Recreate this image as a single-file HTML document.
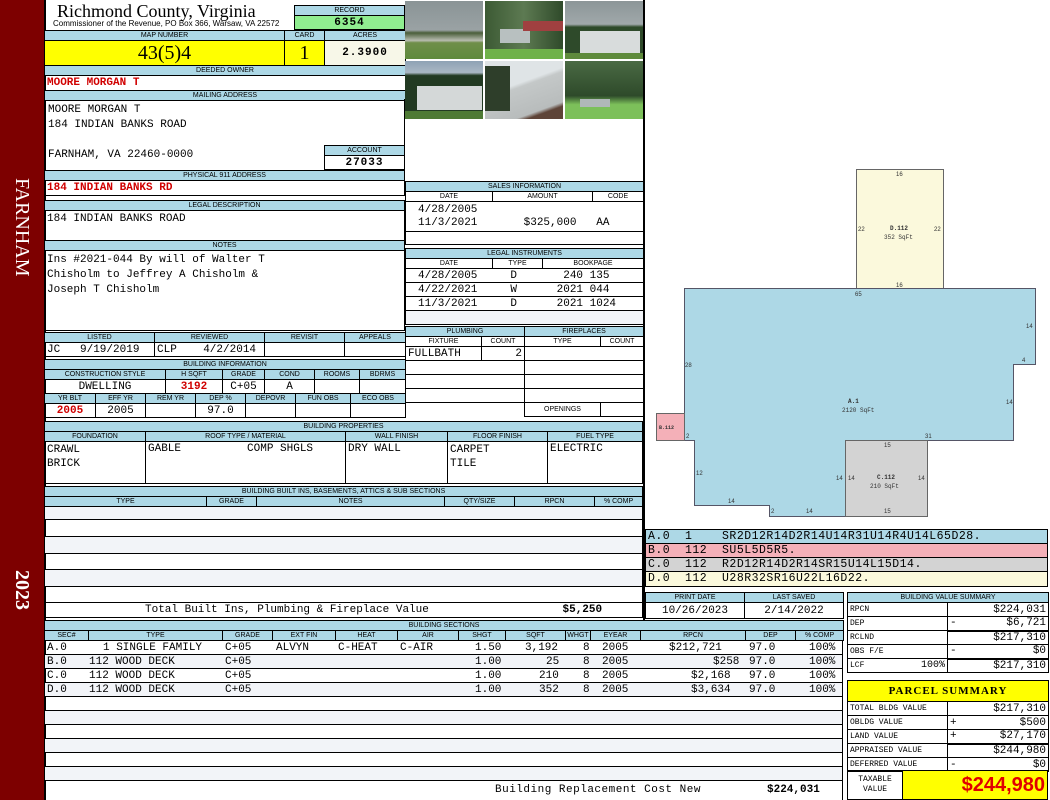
<!DOCTYPE html>
<html><head><meta charset="utf-8"><style>
*{margin:0;padding:0;box-sizing:border-box}
body{width:1050px;height:800px;position:relative;background:#fff;overflow:hidden;font-family:"Liberation Mono",monospace;font-size:11px;color:#000}
.a{position:absolute}
table{position:absolute;border-collapse:collapse;table-layout:fixed}
td{border:1px solid #000;padding:0 2px;white-space:nowrap;overflow:hidden;font-family:"Liberation Mono",monospace;font-size:11px;height:14px;line-height:12px}
td.h{background:#add8e6;font:7px "Liberation Sans",sans-serif;text-align:center;height:10px;line-height:9px;padding:0}
.c{text-align:center}.r{text-align:right}
.red{color:#d00000;font-weight:bold}
.alt td{background:#f2f4f8}
.side{position:absolute;left:0;top:0;width:44px;height:800px;background:#7d0000}
.vt{position:absolute;color:#fff;font:20px "Liberation Serif",serif;transform:rotate(90deg);transform-origin:left top;white-space:nowrap}
.ph{position:absolute;width:78px;height:58px}
.sr{position:absolute;left:44px;width:799px;height:14px;border-bottom:1px solid #000;border-left:1px solid #000;border-right:1px solid #000}
.sr span{position:absolute;top:1px;line-height:13px}
</style></head><body>
<div class="side"></div>
<div class="vt" style="left:33px;top:178px">FARNHAM</div>
<div class="vt" style="left:33px;top:570px;font-weight:bold">2023</div>
<div class="a" style="left:44px;top:0;width:2px;height:800px;background:#000"></div>
<div class="a" style="left:643px;top:0;width:2px;height:620px;background:#000"></div>

<div class="a" style="left:57px;top:1px;font:18px 'Liberation Serif',serif">Richmond County, Virginia</div>
<div class="a" style="left:53px;top:19px;font:8px 'Liberation Sans',sans-serif">Commissioner of the Revenue, PO Box 366, Warsaw, VA 22572</div>
<table style="left:294px;top:5px;width:111px"><tr><td class="h">RECORD</td></tr><tr><td class="c" style="background:#90ee90;font-weight:bold;letter-spacing:1px">6354</td></tr></table>

<table style="left:44px;top:30px;width:361px"><col style="width:240px"><col style="width:40px"><col style="width:81px">
<tr><td class="h">MAP NUMBER</td><td class="h">CARD</td><td class="h">ACRES</td></tr>
<tr><td class="c" style="background:#ffff00;font:20px 'Liberation Serif',serif;height:25px">43(5)4</td><td class="c" style="background:#ffff00;font:20px 'Liberation Serif',serif">1</td><td class="c" style="background:#f7f7e8;font-weight:bold;letter-spacing:1px">2.3900</td></tr>
<tr><td class="h" colspan="3">DEEDED OWNER</td></tr>
<tr><td colspan="3" class="red" style="height:15px">MOORE MORGAN T</td></tr>
<tr><td class="h" colspan="3">MAILING ADDRESS</td></tr>
</table>
<div class="a" style="left:44px;top:99px;width:361px;height:72px;border:1px solid #000;border-top:0"></div>
<div class="a" style="left:48px;top:103px;line-height:15px">MOORE MORGAN T<br>184 INDIAN BANKS ROAD<br><br>FARNHAM, VA 22460-0000</div>
<table style="left:324px;top:145px;width:81px"><tr><td class="h">ACCOUNT</td></tr><tr><td class="c" style="font-weight:bold;letter-spacing:1px">27033</td></tr></table>
<table style="left:44px;top:170px;width:361px"><tr><td class="h">PHYSICAL 911 ADDRESS</td></tr><tr><td class="red" style="height:15px">184 INDIAN BANKS RD</td></tr></table>

<table style="left:44px;top:200px;width:361px"><tr><td class="h">LEGAL DESCRIPTION</td></tr><tr><td style="height:30px;vertical-align:top;padding-top:2px">184 INDIAN BANKS ROAD</td></tr>
<tr><td class="h">NOTES</td></tr><tr><td style="height:80px;vertical-align:top;padding-top:2px;line-height:15px">Ins #2021-044 By will of Walter T<br>Chisholm to Jeffrey A Chisholm &amp;<br>Joseph T Chisholm</td></tr></table>

<table style="left:44px;top:332px;width:361px"><col style="width:110px"><col style="width:110px"><col style="width:80px"><col style="width:61px">
<tr><td class="h">LISTED</td><td class="h">REVIEWED</td><td class="h">REVISIT</td><td class="h">APPEALS</td></tr>
<tr><td>JC&nbsp;&nbsp;&nbsp;9/19/2019</td><td>CLP&nbsp;&nbsp;&nbsp;&nbsp;4/2/2014</td><td></td><td></td></tr></table>

<table style="left:44px;top:359px;width:361px"><col style="width:121px"><col style="width:57px"><col style="width:42px"><col style="width:50px"><col style="width:45px"><col style="width:46px">
<tr><td class="h" colspan="6">BUILDING INFORMATION</td></tr>
<tr><td class="h">CONSTRUCTION STYLE</td><td class="h">H SQFT</td><td class="h">GRADE</td><td class="h">COND</td><td class="h">ROOMS</td><td class="h">BDRMS</td></tr>
<tr><td class="c">DWELLING</td><td class="c red">3192</td><td class="c">C+05</td><td class="c">A</td><td></td><td></td></tr></table>
<table style="left:44px;top:393px;width:361px"><col style="width:51px"><col style="width:50px"><col style="width:50px"><col style="width:50px"><col style="width:50px"><col style="width:55px"><col style="width:55px">
<tr><td class="h">YR BLT</td><td class="h">EFF YR</td><td class="h">REM YR</td><td class="h">DEP %</td><td class="h">DEPOVR</td><td class="h">FUN OBS</td><td class="h">ECO OBS</td></tr>
<tr><td class="c red">2005</td><td class="c">2005</td><td></td><td class="c">97.0</td><td></td><td></td><td></td></tr></table>

<table style="left:44px;top:421px;width:598px"><col style="width:101px"><col style="width:200px"><col style="width:102px"><col style="width:100px"><col style="width:95px">
<tr><td class="h" colspan="5">BUILDING PROPERTIES</td></tr>
<tr><td class="h">FOUNDATION</td><td class="h">ROOF TYPE / MATERIAL</td><td class="h">WALL FINISH</td><td class="h">FLOOR FINISH</td><td class="h">FUEL TYPE</td></tr>
<tr><td style="height:42px;vertical-align:top;line-height:14px;padding-top:1px">CRAWL<br>BRICK</td><td style="vertical-align:top;padding-top:1px">GABLE&nbsp;&nbsp;&nbsp;&nbsp;&nbsp;&nbsp;&nbsp;&nbsp;&nbsp;&nbsp;COMP SHGLS</td><td style="vertical-align:top;padding-top:1px">DRY WALL</td><td style="vertical-align:top;line-height:14px;padding-top:1px">CARPET<br>TILE</td><td style="vertical-align:top;padding-top:1px">ELECTRIC</td></tr></table>

<table style="left:44px;top:486px;width:598px"><col style="width:162px"><col style="width:50px"><col style="width:188px"><col style="width:70px"><col style="width:80px"><col style="width:48px">
<tr><td class="h" colspan="6">BUILDING BUILT INS, BASEMENTS, ATTICS &amp; SUB SECTIONS</td></tr>
<tr><td class="h">TYPE</td><td class="h">GRADE</td><td class="h">NOTES</td><td class="h">QTY/SIZE</td><td class="h">RPCN</td><td class="h">% COMP</td></tr>
<tr class="alt"><td colspan="6" style="height:13px;border-bottom:0"></td></tr>
<tr><td colspan="6" style="height:17px"></td></tr>
<tr class="alt"><td colspan="6" style="height:17px"></td></tr>
<tr><td colspan="6" style="height:16px"></td></tr>
<tr class="alt"><td colspan="6" style="height:17px"></td></tr>
<tr><td colspan="6" style="height:16px"></td></tr>
<tr><td colspan="6" style="height:15px;padding-left:100px">Total Built Ins, Plumbing &amp; Fireplace Value<span style="position:absolute;left:518px;font-weight:bold">$5,250</span></td></tr></table>

<table style="left:44px;top:620px;width:799px"><col style="width:44px"><col style="width:134px"><col style="width:50px"><col style="width:63px"><col style="width:62px"><col style="width:61px"><col style="width:47px"><col style="width:60px"><col style="width:25px"><col style="width:50px"><col style="width:105px"><col style="width:50px"><col style="width:48px">
<tr><td class="h" colspan="13">BUILDING SECTIONS</td></tr>
<tr><td class="h">SEC#</td><td class="h">TYPE</td><td class="h">GRADE</td><td class="h">EXT FIN</td><td class="h">HEAT</td><td class="h">AIR</td><td class="h">SHGT</td><td class="h">SQFT</td><td class="h">WHGT</td><td class="h">EYEAR</td><td class="h">RPCN</td><td class="h">DEP</td><td class="h">% COMP</td></tr></table>

<div class="sr" style="top:641px"><span style="left:2px">A.0</span><span style="left:58px">1 SINGLE FAMILY</span><span style="left:180px">C+05</span><span style="left:231px">ALVYN</span><span style="left:293px">C-HEAT</span><span style="left:355px">C-AIR</span><span style="left:430px">1.50</span><span style="left:480px">3,192</span><span style="left:538px">8</span><span style="left:557px">2005</span><span style="left:624px">$212,721</span><span style="left:704px">97.0</span><span style="left:764px">100%</span></div>
<div class="sr" style="top:655px;background:#f2f4f8"><span style="left:2px">B.0</span><span style="left:44px">112 WOOD DECK</span><span style="left:180px">C+05</span><span style="left:430px">1.00</span><span style="left:501px">25</span><span style="left:538px">8</span><span style="left:557px">2005</span><span style="left:668px">$258</span><span style="left:704px">97.0</span><span style="left:764px">100%</span></div>
<div class="sr" style="top:669px"><span style="left:2px">C.0</span><span style="left:44px">112 WOOD DECK</span><span style="left:180px">C+05</span><span style="left:430px">1.00</span><span style="left:494px">210</span><span style="left:538px">8</span><span style="left:557px">2005</span><span style="left:646px">$2,168</span><span style="left:704px">97.0</span><span style="left:764px">100%</span></div>
<div class="sr" style="top:683px;background:#f2f4f8"><span style="left:2px">D.0</span><span style="left:44px">112 WOOD DECK</span><span style="left:180px">C+05</span><span style="left:430px">1.00</span><span style="left:494px">352</span><span style="left:538px">8</span><span style="left:557px">2005</span><span style="left:646px">$3,634</span><span style="left:704px">97.0</span><span style="left:764px">100%</span></div>
<div class="sr" style="top:697px"></div>
<div class="sr" style="top:711px;background:#f2f4f8"></div>
<div class="sr" style="top:725px"></div>
<div class="sr" style="top:739px;background:#f2f4f8"></div>
<div class="sr" style="top:753px"></div>
<div class="sr" style="top:767px;background:#f2f4f8"></div>
<div class="sr" style="top:781px;height:19px;border-bottom:0"><span style="left:450px;top:3px;letter-spacing:0.5px">Building Replacement Cost New</span><span style="left:722px;top:3px;font-weight:bold">$224,031</span></div>

<!-- photos -->
<div class="ph" style="left:405px;top:1px;background:linear-gradient(#8a9496 0,#9aa2a4 50%,#4a5e3a 55%,#b8bcb0 68%,#6f8e4a 72%,#5f8a3c 100%)"></div>
<div class="ph" style="left:485px;top:1px;background:linear-gradient(90deg,#3c5a34,#5d7a52,#2f4a2a);"><div class="a" style="left:15px;top:28px;width:30px;height:14px;background:#b8c0c0"></div><div class="a" style="left:38px;top:20px;width:40px;height:10px;background:#a04040"></div><div class="a" style="left:0;top:48px;width:78px;height:10px;background:#6fb24a"></div></div>
<div class="ph" style="left:565px;top:1px;background:linear-gradient(#8c9698 0,#a0a8aa 40%,#2e4a2a 45%,#2e4a2a 100%)"><div class="a" style="left:15px;top:30px;width:60px;height:22px;background:#d8dcdc"></div><div class="a" style="left:0;top:52px;width:78px;height:6px;background:#5e8a3c"></div></div>
<div class="ph" style="left:405px;top:61px;background:linear-gradient(#8ea2b4 0,#aab8c4 20%,#223a22 25%,#223a22 100%)"><div class="a" style="left:12px;top:25px;width:65px;height:24px;background:#d4d8d8"></div><div class="a" style="left:0;top:50px;width:78px;height:8px;background:#4e7a34"></div></div>
<div class="ph" style="left:485px;top:61px;background:linear-gradient(160deg,#dfe4e6 0,#dfe4e6 40%,#c4c8c8 45%,#b8bcbc 80%,#5e4438 85%)"><div class="a" style="left:0;top:5px;width:25px;height:45px;background:#2e3e2a"></div></div>
<div class="ph" style="left:565px;top:61px;background:linear-gradient(#4a6a44 0,#2e4a2a 60%,#7cc05a 75%,#7cc05a 100%)"><div class="a" style="left:15px;top:38px;width:30px;height:8px;background:#b0b8b8"></div></div>

<table style="left:405px;top:181px;width:238px"><col style="width:87px"><col style="width:100px"><col style="width:51px">
<tr><td class="h" colspan="3">SALES INFORMATION</td></tr>
<tr><td class="h" style="background:#fff">DATE</td><td class="h" style="background:#fff">AMOUNT</td><td class="h" style="background:#fff">CODE</td></tr>
<tr><td colspan="3" style="line-height:13px;padding-left:12px;height:30px">4/28/2005<br>11/3/2021&nbsp;&nbsp;&nbsp;&nbsp;&nbsp;&nbsp;&nbsp;$325,000&nbsp;&nbsp;&nbsp;AA</td></tr>
<tr><td colspan="3" style="height:13px"></td></tr></table>
<table style="left:405px;top:248px;width:238px"><col style="width:87px"><col style="width:50px"><col style="width:101px">
<tr><td class="h" colspan="3">LEGAL INSTRUMENTS</td></tr>
<tr><td class="h" style="background:#fff">DATE</td><td class="h" style="background:#fff">TYPE</td><td class="h" style="background:#fff">BOOKPAGE</td></tr>
<tr><td colspan="3" style="height:14px;padding-left:12px">4/28/2005&nbsp;&nbsp;&nbsp;&nbsp;&nbsp;D&nbsp;&nbsp;&nbsp;&nbsp;&nbsp;&nbsp;&nbsp;240 135</td></tr>
<tr><td colspan="3" style="height:14px;padding-left:12px">4/22/2021&nbsp;&nbsp;&nbsp;&nbsp;&nbsp;W&nbsp;&nbsp;&nbsp;&nbsp;&nbsp;&nbsp;2021 044</td></tr>
<tr><td colspan="3" style="height:14px;padding-left:12px">11/3/2021&nbsp;&nbsp;&nbsp;&nbsp;&nbsp;D&nbsp;&nbsp;&nbsp;&nbsp;&nbsp;&nbsp;2021 1024</td></tr>
<tr class="alt"><td colspan="3" style="height:14px"></td></tr></table>
<table style="left:405px;top:326px;width:238px"><col style="width:76px"><col style="width:43px"><col style="width:76px"><col style="width:43px">
<tr><td class="h" colspan="2">PLUMBING</td><td class="h" colspan="2">FIREPLACES</td></tr>
<tr><td class="h" style="background:#fff">FIXTURE</td><td class="h" style="background:#fff">COUNT</td><td class="h" style="background:#fff">TYPE</td><td class="h" style="background:#fff">COUNT</td></tr>
<tr><td style="padding-left:2px">FULLBATH</td><td class="r">2</td><td colspan="2"></td></tr>
<tr><td colspan="2"></td><td colspan="2"></td></tr>
<tr><td colspan="2"></td><td colspan="2"></td></tr>
<tr><td colspan="2"></td><td colspan="2"></td></tr>
<tr><td colspan="2" style="border-bottom:0"></td><td class="h" style="background:#fff;height:14px">OPENINGS</td><td></td></tr></table>

<!-- sketch -->
<svg class="a" style="left:645px;top:0" width="405" height="528" viewBox="645 0 405 528" font-family="Liberation Sans" font-size="6" fill="#333">
<rect x="856.5" y="169.5" width="87" height="119" fill="#fbf9dc" stroke="#666"/>
<polygon points="684.5,288.5 1035.5,288.5 1035.5,364.5 1013.5,364.5 1013.5,440.5 927.5,440.5 927.5,516.5 769.5,516.5 769.5,505.5 694.5,505.5 694.5,440.5 684.5,440.5" fill="#add8e6" stroke="#556"/>
<rect x="656.5" y="413.5" width="28" height="27" fill="#f4b0b8" stroke="#666"/>
<rect x="845.5" y="440.5" width="82" height="76" fill="#d3d3d3" stroke="#666"/>
<text x="896" y="176">16</text><text x="858" y="231">22</text><text x="934" y="231">22</text>
<text x="890" y="230" font-weight="bold" font-family="Liberation Mono">D.112</text><text x="884" y="239" font-family="Liberation Mono">352 SqFt</text>
<text x="896" y="287">16</text><text x="855" y="296">65</text><text x="1026" y="328">14</text><text x="1022" y="362">4</text><text x="1006" y="404">14</text>
<text x="685" y="367">28</text><text x="848" y="403" font-weight="bold" font-family="Liberation Mono">A.1</text><text x="842" y="412" font-family="Liberation Mono">2120 SqFt</text>
<text x="659" y="429" font-weight="bold" font-family="Liberation Mono" font-size="5">B.112</text>
<text x="686" y="438">2</text><text x="925" y="438">31</text><text x="884" y="447">15</text>
<text x="696" y="475">12</text><text x="836" y="480">14</text><text x="848" y="480">14</text><text x="918" y="480">14</text>
<text x="877" y="479" font-weight="bold" font-family="Liberation Mono">C.112</text><text x="870" y="488" font-family="Liberation Mono">210 SqFt</text>
<text x="728" y="503">14</text><text x="771" y="513">2</text><text x="806" y="513">14</text><text x="884" y="513">15</text>
</svg>

<div class="a" style="left:645px;top:529px;width:403px;border:1px solid #000;font-size:11.5px;letter-spacing:0.5px">
<div style="background:#add8e6;height:14px;padding-left:2px;border-bottom:1px solid #000">A.0&nbsp;&nbsp;1&nbsp;&nbsp;&nbsp;&nbsp;SR2D12R14D2R14U14R31U14R4U14L65D28.</div>
<div style="background:#f4b0b8;height:14px;padding-left:2px;border-bottom:1px solid #000">B.0&nbsp;&nbsp;112&nbsp;&nbsp;SU5L5D5R5.</div>
<div style="background:#d3d3d3;height:14px;padding-left:2px;border-bottom:1px solid #000">C.0&nbsp;&nbsp;112&nbsp;&nbsp;R2D12R14D2R14SR15U14L15D14.</div>
<div style="background:#fbf9dc;height:14px;padding-left:2px">D.0&nbsp;&nbsp;112&nbsp;&nbsp;U28R32SR16U22L16D22.</div></div>

<table style="left:645px;top:592px;width:198px"><col style="width:99px"><col style="width:99px">
<tr><td class="h">PRINT DATE</td><td class="h">LAST SAVED</td></tr>
<tr><td class="c" style="height:16px">10/26/2023</td><td class="c">2/14/2022</td></tr></table>

<table style="left:847px;top:592px;width:201px;font-size:9px"><col style="width:100px"><col style="width:101px">
<tr><td class="h" colspan="2">BUILDING VALUE SUMMARY</td></tr>
<tr><td style="font-size:8px">RPCN</td><td class="r">$224,031</td></tr>
<tr><td style="font-size:8px">DEP</td><td class="r" style="border-bottom:2px solid #000"><span style="float:left">-</span>$6,721</td></tr>
<tr><td style="font-size:8px">RCLND</td><td class="r">$217,310</td></tr>
<tr><td style="font-size:8px">OBS F/E</td><td class="r" style="border-bottom:2px solid #000"><span style="float:left">-</span>$0</td></tr>
<tr><td style="font-size:8px">LCF<span style="float:right;font-size:10px">100%</span></td><td class="r">$217,310</td></tr></table>

<table style="left:847px;top:680px;width:201px"><col style="width:100px"><col style="width:101px">
<tr><td colspan="2" class="c" style="background:#ffff00;font:bold 11px 'Liberation Serif',serif;height:21px;letter-spacing:1px">PARCEL SUMMARY</td></tr>
<tr><td style="font-size:8px">TOTAL BLDG VALUE</td><td class="r">$217,310</td></tr>
<tr><td style="font-size:8px">OBLDG VALUE</td><td class="r"><span style="float:left">+</span>$500</td></tr>
<tr><td style="font-size:8px">LAND VALUE</td><td class="r" style="border-bottom:2px solid #000"><span style="float:left">+</span>$27,170</td></tr>
<tr><td style="font-size:8px">APPRAISED VALUE</td><td class="r">$244,980</td></tr>
<tr><td style="font-size:8px">DEFERRED VALUE</td><td class="r"><span style="float:left">-</span>$0</td></tr></table>
<div class="a" style="left:847px;top:770px;width:56px;height:30px;border:1px solid #000;font-size:8px;text-align:center;line-height:10px;padding-top:4px">TAXABLE<br>VALUE</div>
<div class="a" style="left:902px;top:770px;width:146px;height:30px;background:#ffff00;border:1px solid #000;text-align:right;color:#e00000;font:bold 20px 'Liberation Sans',sans-serif;line-height:28px;padding-right:2px">$244,980</div>
</body></html>
